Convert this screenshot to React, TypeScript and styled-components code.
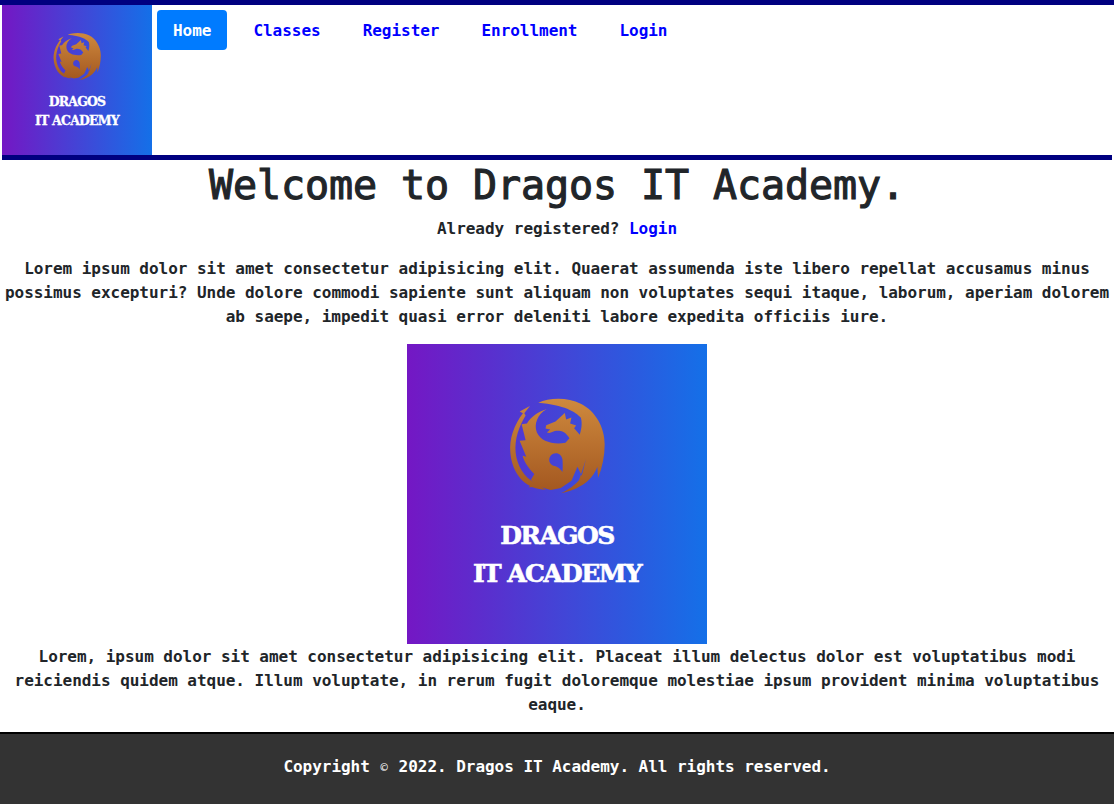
import styled, { createGlobalStyle } from "styled-components";

const GlobalStyle = createGlobalStyle`
  * { box-sizing: border-box; }
  body {
    margin: 0;
    border-top: 5px solid #000080;
    background: #fff;
    color: #212529;
    font-family: "DejaVu Sans Mono", "Liberation Mono", monospace;
    font-size: 16px;
    line-height: 24px;
    letter-spacing: -0.032px;
    overflow: hidden;
  }
`;

const Header = styled.header`
  display: flex;
  margin: 0 2px;
  height: 155px;
  border-bottom: 5px solid #000080;
`;

const Brand = styled.div<{ $size: number }>`
  width: ${(p) => p.$size}px;
  height: ${(p) => p.$size}px;
  flex: none;
  display: flex;
  flex-direction: column;
  align-items: center;
  background: linear-gradient(90deg, #7417c4, #1470e8);
`;

const BrandMark = styled.svg<{ $size: number; $top: number }>`
  width: ${(p) => p.$size}px;
  height: ${(p) => p.$size}px;
  margin-top: ${(p) => p.$top}px;
  flex: none;
`;

const BrandName = styled.div<{ $k: number }>`
  margin-top: ${(p) => 23 * p.$k}px;
  color: #fff;
  font-family: "DejaVu Serif", "Liberation Serif", serif;
  font-weight: 700;
  font-size: ${(p) => 25 * p.$k}px;
  letter-spacing: ${(p) => -1.6 * p.$k}px;
  line-height: ${(p) => 38 * p.$k}px;
  -webkit-text-stroke: ${(p) => 0.6 * p.$k}px #fff;
  text-align: center;
  white-space: nowrap;
`;

const Nav = styled.nav`
  display: flex;
  gap: 10px;
  align-items: flex-start;
  padding: 5px;
`;

const NavLink = styled.a<{ $active?: boolean }>`
  padding: 9px 16px 7px;
  border-radius: 4px;
  font-weight: 700;
  color: ${(p) => (p.$active ? "#fff" : "#0000ff")};
  background: ${(p) => (p.$active ? "#007bff" : "transparent")};
  text-decoration: none;
`;

const Main = styled.main`
  text-align: center;
`;

const Title = styled.h1`
  margin: 0 0 7px;
  padding-top: 1px;
  font-size: 40px;
  line-height: 48px;
  letter-spacing: -0.08px;
  font-weight: 400;
  -webkit-text-stroke: 1.1px #212529;
`;

const Text = styled.p`
  margin: 0 0 15px;
  padding-top: 1px;
  font-weight: 700;
`;

const InlineLink = styled.a`
  color: #0000ff;
  text-decoration: none;
`;

const Hero = styled.div`
  display: flex;
  justify-content: center;
`;

const Footer = styled.footer`
  border-top: 2px solid #000;
  background: #333;
  color: #fff;
  padding: 21px 0 25px;
  text-align: center;
  font-weight: 700;
`;

const CopyMark = styled.span`
  display: inline-block;
  width: 9.6px;
  font-size: 12px;
  font-weight: 400;
  text-align: center;
`;

const Logo = ({ size }: { size: number }) => {
  const k = size / 300;
  const gradient = `drg${size}`;
  return (
    <Brand $size={size}>
      <BrandMark $size={97 * k} $top={53 * k} viewBox="85 48 290 292">
        <defs>
          <linearGradient id={gradient} gradientUnits="userSpaceOnUse" x1="0" y1="50" x2="0" y2="340">
            <stop offset="0" stopColor="#cf8a3e" />
            <stop offset="1" stopColor="#a2561f" />
          </linearGradient>
        </defs>
        <path
          fill={`url(#${gradient})`}
          fillRule="evenodd"
          d="M172 65 C205 50 260 48 300 68 C345 90 372 140 372 190 C372 225 365 260 352 292 L350 258 C340 285 315 322 240 338 C262 328 285 312 295 298 L316 235 L303 285 L290 258 L272 300 L240 322 L210 328 L175 318 L142 320 L160 308 L150 298 L160 280 C145 265 130 245 125 225 L136 228 L116 180 L134 178 L122 130 L138 128 C150 108 172 92 197 85 C170 100 158 130 168 155 C180 182 215 192 254 186 L266 172 C254 152 240 148 222 150 L206 156 L198 155 L208 146 L194 143 L196 133 L224 122 L252 96 L256 116 L272 110 L268 128 L286 134 L280 142 L297 162 C304 140 304 122 300 110 C285 92 250 72 172 65 Z M225 217 C213 217 205 227 205 238 C205 248 213 256 226 257 C234 260 240 266 245 274 C246 262 246 248 245 236 C243 225 236 217 225 217 Z"
        />
        <path
          fill={`url(#${gradient})`}
          d="M147 75 L116 92 L126 97 C100 130 84 175 88 215 C92 265 120 315 175 325 L195 328 L160 305 C130 290 108 255 104 215 C100 175 115 135 134 104 L130 97 Z"
        />
      </BrandMark>
      <BrandName $k={k}>
        DRAGOS
        <br />
        IT ACADEMY
      </BrandName>
    </Brand>
  );
};

const App = () => (
  <>
    <GlobalStyle />
    <Header>
      <Logo size={150} />
      <Nav>
        <NavLink $active href="#">Home</NavLink>
        <NavLink href="#">Classes</NavLink>
        <NavLink href="#">Register</NavLink>
        <NavLink href="#">Enrollment</NavLink>
        <NavLink href="#">Login</NavLink>
      </Nav>
    </Header>
    <Main>
      <Title>Welcome to Dragos IT Academy.</Title>
      <Text>
        Already registered? <InlineLink href="#">Login</InlineLink>
      </Text>
      <Text>
        Lorem ipsum dolor sit amet consectetur adipisicing elit. Quaerat assumenda iste libero
        repellat accusamus minus possimus excepturi? Unde dolore commodi sapiente sunt aliquam non
        voluptates sequi itaque, laborum, aperiam dolorem ab saepe, impedit quasi error deleniti
        labore expedita officiis iure.
      </Text>
      <Hero>
        <Logo size={300} />
      </Hero>
      <Text>
        Lorem, ipsum dolor sit amet consectetur adipisicing elit. Placeat illum delectus dolor est
        voluptatibus modi reiciendis quidem atque. Illum voluptate, in rerum fugit doloremque
        molestiae ipsum provident minima voluptatibus eaque.
      </Text>
    </Main>
    <Footer>
      Copyright <CopyMark>©</CopyMark> 2022. Dragos IT Academy. All rights reserved.
    </Footer>
  </>
);

export default App;
